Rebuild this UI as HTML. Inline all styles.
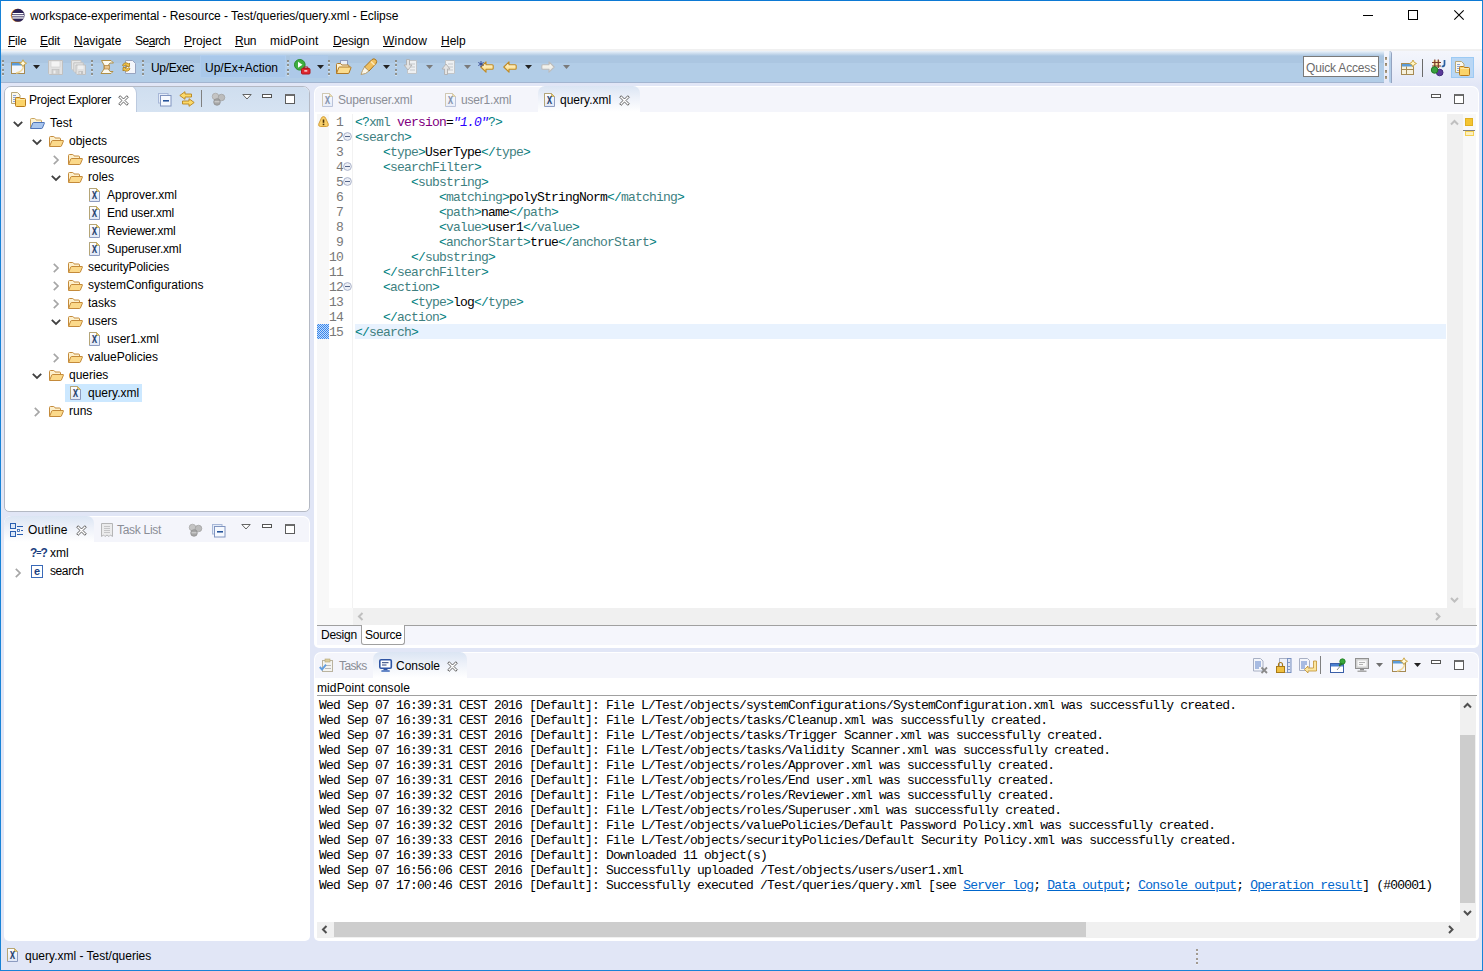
<!DOCTYPE html>
<html><head><meta charset="utf-8"><title>Eclipse</title>
<style>
*{box-sizing:border-box;margin:0;padding:0}
html,body{width:1483px;height:971px;overflow:hidden;background:#e1e6f6}
body{font-family:"Liberation Sans",sans-serif;font-size:12px;color:#000;position:relative}
.a{position:absolute}
.t{position:absolute;white-space:pre;line-height:14px;height:14px}
.mono{font-family:"Liberation Mono",monospace;font-size:11.67px}
u{text-decoration:underline;text-underline-offset:1px}
#win{position:absolute;left:0;top:0;width:1483px;height:971px;border:1px solid #1883d7;border-top-color:#0c79d4}
#title{left:1px;top:1px;width:1481px;height:30px;background:#fff}
#menu{left:1px;top:31px;width:1481px;height:19px;background:#fff}
#tbar{left:1px;top:49px;width:1383px;height:34px;background:linear-gradient(#f0f0f0 0,#f0f0f0 2px,#ecf3fa 2px,#abc6e1 7px,#abc6e1 14px,#b2cde7 14px,#b2cde7 33px,#a3b5d0 33px)}
.panel{position:absolute;background:#fff;border-radius:7px 7px 5px 5px;box-shadow:0 0 0 1px #c9d0e4;overflow:hidden}
.hdr{position:absolute;left:1px;top:1px;right:1px;height:25px;background:#f4f5fb;border-radius:6px 6px 0 0}
.hdr.act{left:0;top:0;right:0;height:25px;border-radius:0;background:linear-gradient(#cfdeef,#d6e3f2)}
.tab{position:absolute;top:0;height:26px;background:#fff;border-radius:7px 7px 0 0}
.tab.in{background:linear-gradient(#dbe5f3,#edf1f9 45%,#fff)}
.row{position:absolute;left:0;height:18px;width:304px}
.code{position:absolute;white-space:pre;height:15px;line-height:15px;font-family:"Liberation Mono",monospace;font-size:13px;letter-spacing:-.8px}
.ln{position:absolute;width:30px;text-align:right;height:15px;line-height:15px;font-family:"Liberation Mono",monospace;font-size:13px;letter-spacing:-.8px;color:#787878}
.tg{color:#3f7f7f}.br{color:#008080}.at{color:#7f007f}.av{color:#2a00ff;font-style:italic}
.con{position:absolute;white-space:pre;height:15px;line-height:15px;font-family:"Liberation Mono",monospace;font-size:13px;letter-spacing:-.8px}
.con a{color:#0066cc;text-decoration:underline}
svg{position:absolute;overflow:visible}
</style></head>
<body>
<div id="win"></div>
<div id="title" class="a"></div>
<svg style="left:10px;top:8px" width="16" height="15" viewBox="0 0 16 15"><circle cx="7.300" cy="7.300" r="6.500" fill="#f7941e"/><circle cx="8.100" cy="7.300" r="6.500" fill="#2c2255"/><rect x="2.500" y="5" width="11" height="1.300" fill="#fff"/><rect x="1.900" y="7.100" width="12.300" height="1.300" fill="#fff"/><rect x="2.300" y="9.300" width="11.500" height="1.300" fill="#fff"/></svg>
<div class="t" style="left:30px;top:9px;letter-spacing:-.04px">workspace-experimental - Resource - Test/queries/query.xml - Eclipse</div>
<svg style="left:1363px;top:10px" width="60" height="12" viewBox="0 0 60 12"><path d="M0 5.500h10" stroke="#000" fill="none"/><rect x="45.500" y=".5" width="9" height="9" fill="none" stroke="#000"/></svg>
<svg style="left:1454px;top:10px" width="10" height="10" viewBox="0 0 10 10"><path d="M.3.300l9.400 9.400M9.700.300l-9.400 9.400" stroke="#000" stroke-width="1.100" fill="none"/></svg>
<div id="menu" class="a"></div>
<div class="t" style="left:8px;top:34px"><span style="letter-spacing:-.25px"><u>F</u>ile</span></div>
<div class="t" style="left:40px;top:34px"><span style="letter-spacing:-.2px"><u>E</u>dit</span></div>
<div class="t" style="left:74px;top:34px"><u>N</u>avigate</div>
<div class="t" style="left:135px;top:34px"><span style="letter-spacing:-.5px">Se<u>a</u>rch</span></div>
<div class="t" style="left:184px;top:34px"><u>P</u>roject</div>
<div class="t" style="left:235px;top:34px"><span style="letter-spacing:-.3px"><u>R</u>un</span></div>
<div class="t" style="left:270px;top:34px"><span style="letter-spacing:.25px">midPoint</span></div>
<div class="t" style="left:333px;top:34px"><span style="letter-spacing:-.2px"><u>D</u>esign</span></div>
<div class="t" style="left:383px;top:34px"><span style="letter-spacing:.25px"><u>W</u>indow</span></div>
<div class="t" style="left:441px;top:34px"><u>H</u>elp</div>
<div class="a" style="left:1px;top:49px;width:1481px;height:2px;background:#f0f0f0"></div>
<div id="tbar" class="a"></div>
<div class="a" style="left:2px;top:60px;width:2px;height:3px;background:linear-gradient(rgba(120,104,78,.6) 0,rgba(120,104,78,.6) 2px,rgba(255,255,255,.4) 2px)"></div><div class="a" style="left:2px;top:64px;width:2px;height:3px;background:linear-gradient(rgba(120,104,78,.6) 0,rgba(120,104,78,.6) 2px,rgba(255,255,255,.4) 2px)"></div><div class="a" style="left:2px;top:69px;width:2px;height:3px;background:linear-gradient(rgba(120,104,78,.6) 0,rgba(120,104,78,.6) 2px,rgba(255,255,255,.4) 2px)"></div><div class="a" style="left:2px;top:73px;width:2px;height:3px;background:linear-gradient(rgba(120,104,78,.6) 0,rgba(120,104,78,.6) 2px,rgba(255,255,255,.4) 2px)"></div>
<svg style="left:11px;top:59px" width="17" height="16" viewBox="0 0 17 16"><rect x=".5" y="3.500" width="13" height="11" fill="#f4f7fc" stroke="#a68a52"/><rect x="1" y="4" width="12" height="2.500" fill="#5a9bd8"/><path d="M12 .8l1.200 2.300 2.300 1.200-2.300 1.200-1.200 2.300-1.200-2.300-2.300-1.200 2.300-1.200z" fill="#fffbe0" stroke="#c9a03a" stroke-width=".9"/><path d="M5 14q6-1 7.500-6" stroke="#f0d89a" stroke-width="1.500" fill="none"/></svg>
<svg style="left:33px;top:65px" width="7" height="4" viewBox="0 0 7 4"><path d="M0 0h7L3.5 4z" fill="#222"/></svg>
<svg style="left:48px;top:60px" width="15" height="15" viewBox="0 0 15 15"><path d="M.5.5h14v14h-13l-1-1z" fill="#e2e2e2" stroke="#c0c0c0"/><rect x="3" y="1" width="9" height="6" fill="#f4f4f4" stroke="#cccccc" stroke-width=".6"/><rect x="4" y="9.500" width="7" height="5" fill="#d0d0d0" stroke="#bcbcbc" stroke-width=".6"/><rect x="5.500" y="10.500" width="2" height="3" fill="#eee"/></svg>
<svg style="left:71px;top:60px" width="15" height="15" viewBox="0 0 15 15"><path d="M.500.500h9.500v9.500h-8.500l-1-1z" fill="#e6e6e6" stroke="#c6c6c6"/><path d="M2.800 2.800h9.500v9.500h-8.500l-1-1z" fill="#e6e6e6" stroke="#c4c4c4"/><path d="M5 5h9.500v9.500h-8.500l-1-1z" fill="#e2e2e2" stroke="#c0c0c0"/><rect x="7" y="5.500" width="5.500" height="3.500" fill="#f0f0f0"/><rect x="7.500" y="11" width="4.500" height="3.500" fill="#c2c2c2"/><rect x="8.500" y="11.800" width="1.300" height="2" fill="#eee"/></svg>
<div class="a" style="left:91px;top:60px;width:2px;height:3px;background:linear-gradient(rgba(120,104,78,.6) 0,rgba(120,104,78,.6) 2px,rgba(255,255,255,.4) 2px)"></div><div class="a" style="left:91px;top:64px;width:2px;height:3px;background:linear-gradient(rgba(120,104,78,.6) 0,rgba(120,104,78,.6) 2px,rgba(255,255,255,.4) 2px)"></div><div class="a" style="left:91px;top:69px;width:2px;height:3px;background:linear-gradient(rgba(120,104,78,.6) 0,rgba(120,104,78,.6) 2px,rgba(255,255,255,.4) 2px)"></div><div class="a" style="left:91px;top:73px;width:2px;height:3px;background:linear-gradient(rgba(120,104,78,.6) 0,rgba(120,104,78,.6) 2px,rgba(255,255,255,.4) 2px)"></div>
<svg style="left:100px;top:59px" width="15" height="16" viewBox="0 0 15 16"><path d="M1.500 1.500h9.500l2.500 2.500h-3.500l-1.500 2v4l1.500 2.500h3l-2 2h-10l3-4.500v-4z" fill="#fdfaf0" stroke="#b09048"/><rect x="4.500" y="6.500" width="5" height="3.500" fill="#e8c48c" stroke="#b88a48" stroke-width=".8"/></svg>
<svg style="left:121px;top:59px" width="16" height="16" viewBox="0 0 16 16"><path d="M4.500 1.500h7l3 3v10h-10z" fill="#f4f6fb" stroke="#98a4c0"/><path d="M1.500 6.500a3.500 3.500 0 016-1.500l1-1v3.500h-3.500l1-1a2 2 0 00-3 .8zM9 9.500a3.500 3.500 0 01-6 1.500l-1 1v-3.500h3.500l-1 1a2 2 0 003-.8z" fill="#f4c64a" stroke="#a87a1c" stroke-width=".8"/></svg>
<div class="a" style="left:142px;top:60px;width:2px;height:3px;background:linear-gradient(rgba(120,104,78,.6) 0,rgba(120,104,78,.6) 2px,rgba(255,255,255,.4) 2px)"></div><div class="a" style="left:142px;top:64px;width:2px;height:3px;background:linear-gradient(rgba(120,104,78,.6) 0,rgba(120,104,78,.6) 2px,rgba(255,255,255,.4) 2px)"></div><div class="a" style="left:142px;top:69px;width:2px;height:3px;background:linear-gradient(rgba(120,104,78,.6) 0,rgba(120,104,78,.6) 2px,rgba(255,255,255,.4) 2px)"></div><div class="a" style="left:142px;top:73px;width:2px;height:3px;background:linear-gradient(rgba(120,104,78,.6) 0,rgba(120,104,78,.6) 2px,rgba(255,255,255,.4) 2px)"></div>
<div class="t" style="left:151px;top:61px;letter-spacing:-0.33px">Up/Exec</div>
<div class="a" style="left:200px;top:55px;width:86px;height:23px;background:#a9c8ea;border:1px solid #b0cdee"></div>
<div class="t" style="left:205px;top:61px">Up/Ex+Action</div>
<div class="a" style="left:287px;top:60px;width:2px;height:3px;background:linear-gradient(rgba(120,104,78,.6) 0,rgba(120,104,78,.6) 2px,rgba(255,255,255,.4) 2px)"></div><div class="a" style="left:287px;top:64px;width:2px;height:3px;background:linear-gradient(rgba(120,104,78,.6) 0,rgba(120,104,78,.6) 2px,rgba(255,255,255,.4) 2px)"></div><div class="a" style="left:287px;top:69px;width:2px;height:3px;background:linear-gradient(rgba(120,104,78,.6) 0,rgba(120,104,78,.6) 2px,rgba(255,255,255,.4) 2px)"></div><div class="a" style="left:287px;top:73px;width:2px;height:3px;background:linear-gradient(rgba(120,104,78,.6) 0,rgba(120,104,78,.6) 2px,rgba(255,255,255,.4) 2px)"></div>
<div class="a" style="left:290px;top:55px;width:38px;height:23px;background:#adc9e8"></div>
<svg style="left:294px;top:59px" width="17" height="16" viewBox="0 0 17 16"><circle cx="5.800" cy="5.800" r="5.300" fill="#3fae3f" stroke="#2a8a2c"/><path d="M4 2.800l4.500 3-4.500 3z" fill="#fff"/><rect x="7.500" y="9.500" width="8.500" height="5.500" rx="1" fill="#e02830" stroke="#b01820"/><path d="M9.800 9.500v-1.500h4v1.500" fill="none" stroke="#b01820"/><rect x="10.300" y="11.300" width="3" height="1.200" fill="#fff"/></svg>
<svg style="left:317px;top:65px" width="7" height="4" viewBox="0 0 7 4"><path d="M0 0h7L3.5 4z" fill="#222"/></svg>
<div class="a" style="left:328px;top:60px;width:2px;height:3px;background:linear-gradient(rgba(120,104,78,.6) 0,rgba(120,104,78,.6) 2px,rgba(255,255,255,.4) 2px)"></div><div class="a" style="left:328px;top:64px;width:2px;height:3px;background:linear-gradient(rgba(120,104,78,.6) 0,rgba(120,104,78,.6) 2px,rgba(255,255,255,.4) 2px)"></div><div class="a" style="left:328px;top:69px;width:2px;height:3px;background:linear-gradient(rgba(120,104,78,.6) 0,rgba(120,104,78,.6) 2px,rgba(255,255,255,.4) 2px)"></div><div class="a" style="left:328px;top:73px;width:2px;height:3px;background:linear-gradient(rgba(120,104,78,.6) 0,rgba(120,104,78,.6) 2px,rgba(255,255,255,.4) 2px)"></div>
<svg style="left:335px;top:59px" width="17" height="16" viewBox="0 0 17 16"><rect x="5.500" y="1.500" width="7" height="5" fill="#e9eef7" stroke="#8c9bbd"/><path d="M1.500 14.500v-9q0-1 1-1h3l1.300 1.500h6.200q1 0 1 1v1" fill="#fdf3d4" stroke="#b07a28"/><path d="M1.500 14.500l2.300-6q.2-.5.800-.5h10.900q.8 0 .5.700l-2 5.300q-.2.5-.8.500z" fill="#fbdc8e" stroke="#b07a28"/></svg>
<svg style="left:360px;top:58px" width="18" height="17" viewBox="0 0 18 17"><path d="M12 1.500q2-1.500 3.800.2 1.700 1.800.2 3.800l-7 7.500-4.500-4z" fill="#f0c060" stroke="#a8741c"/><path d="M4.500 9l4.500 4-3.500 2.500-4.500 1 1.500-4z" fill="#fbf6e8" stroke="#b8a070"/><path d="M11 3.500l3.500 3.500" stroke="#fbe8b8" stroke-width="1.500"/></svg>
<svg style="left:383px;top:65px" width="7" height="4" viewBox="0 0 7 4"><path d="M0 0h7L3.5 4z" fill="#222"/></svg>
<div class="a" style="left:395px;top:60px;width:2px;height:3px;background:linear-gradient(rgba(120,104,78,.6) 0,rgba(120,104,78,.6) 2px,rgba(255,255,255,.4) 2px)"></div><div class="a" style="left:395px;top:64px;width:2px;height:3px;background:linear-gradient(rgba(120,104,78,.6) 0,rgba(120,104,78,.6) 2px,rgba(255,255,255,.4) 2px)"></div><div class="a" style="left:395px;top:69px;width:2px;height:3px;background:linear-gradient(rgba(120,104,78,.6) 0,rgba(120,104,78,.6) 2px,rgba(255,255,255,.4) 2px)"></div><div class="a" style="left:395px;top:73px;width:2px;height:3px;background:linear-gradient(rgba(120,104,78,.6) 0,rgba(120,104,78,.6) 2px,rgba(255,255,255,.4) 2px)"></div>
<svg style="left:403px;top:59px" width="15" height="16" viewBox="0 0 15 16"><path d="M4.500 1.500h9v13h-9z" fill="#eef0f2" stroke="#c0c4c8"/><path d="M7 5h5M7 8h5M7 11h5" stroke="#c4c8cc"/><path d="M3.500.5h3v5.500h2.500l-4 5-4-5h2.500z" fill="#e4e4e4" stroke="#b0b0b0" stroke-width=".9"/></svg>
<svg style="left:426px;top:65px" width="7" height="4" viewBox="0 0 7 4"><path d="M0 0h7L3.5 4z" fill="#7a7a7a"/></svg>
<svg style="left:441px;top:59px" width="15" height="16" viewBox="0 0 15 16"><path d="M4.500 1.500h9v13h-9z" fill="#eef0f2" stroke="#c0c4c8"/><path d="M7 5h5M7 8h5M7 11h5" stroke="#c4c8cc"/><path d="M3.500 15.500h3v-5.500h2.500l-4-5-4 5h2.500z" fill="#e4e4e4" stroke="#b0b0b0" stroke-width=".9"/></svg>
<svg style="left:464px;top:65px" width="7" height="4" viewBox="0 0 7 4"><path d="M0 0h7L3.5 4z" fill="#7a7a7a"/></svg>
<svg style="left:480px;top:61px" width="14" height="12" viewBox="0 0 14 12"><defs><linearGradient id="ag480" x1="0" y1="0" x2="0" y2="1"><stop offset="0" stop-color="#fffdf0"/><stop offset="1" stop-color="#fbd468"/></linearGradient></defs><path d="M.8 6L6 .8v3h6.200q1 0 1 1v2.400q0 1-1 1H6v3z" fill="url(#ag480)" stroke="#c08a24" stroke-width="1.100" stroke-linejoin="round"/></svg>
<svg style="left:477.500px;top:60.500px" width="6" height="6" viewBox="0 0 6 6"><path d="M3 0v6M.3 1.500l5.400 3M5.700 1.500L.3 4.500" stroke="#2a3f8f" stroke-width=".9"/></svg>
<svg style="left:503px;top:61px" width="14" height="12" viewBox="0 0 14 12"><defs><linearGradient id="ag503" x1="0" y1="0" x2="0" y2="1"><stop offset="0" stop-color="#fffdf0"/><stop offset="1" stop-color="#fbd468"/></linearGradient></defs><path d="M.8 6L6 .8v3h6.200q1 0 1 1v2.400q0 1-1 1H6v3z" fill="url(#ag503)" stroke="#c08a24" stroke-width="1.100" stroke-linejoin="round"/></svg>
<svg style="left:525px;top:65px" width="7" height="4" viewBox="0 0 7 4"><path d="M0 0h7L3.5 4z" fill="#222"/></svg>
<svg style="left:541px;top:61px" width="14" height="12" viewBox="0 0 14 12"><defs><linearGradient id="ag541" x1="0" y1="0" x2="0" y2="1"><stop offset="0" stop-color="#fffdf0"/><stop offset="1" stop-color="#e6e6e6"/></linearGradient></defs><path transform="translate(14,0) scale(-1,1)" d="M.8 6L6 .8v3h6.200q1 0 1 1v2.400q0 1-1 1H6v3z" fill="url(#ag541)" stroke="#bcbcbc" stroke-width="1.100" stroke-linejoin="round"/></svg>
<svg style="left:563px;top:65px" width="7" height="4" viewBox="0 0 7 4"><path d="M0 0h7L3.5 4z" fill="#7a7a7a"/></svg>
<div class="a" style="left:1384px;top:51px;width:98px;height:35px;background:linear-gradient(#f4f6fc,#eef1fa 40%,#e1e6f6)"></div>
<div class="a" style="left:1389px;top:51px;width:3px;height:32px;background:linear-gradient(#dbe7f4,#b2cde7 8px);border-right:1px solid #93a3c0;border-radius:0 3px 0 2px"></div>
<div class="a" style="left:1303px;top:56px;width:76px;height:21px;background:#fff;border:1px solid #7a7a7a"></div>
<div class="t" style="left:1306px;top:60.500px;color:#6a6a6a;letter-spacing:-.17px">Quick Access</div>
<div class="a" style="left:1385px;top:57px;width:2px;height:3px;background:linear-gradient(#8a7c68,#b8a888)"></div>
<div class="a" style="left:1385px;top:63px;width:2px;height:3px;background:linear-gradient(#8a7c68,#b8a888)"></div>
<div class="a" style="left:1385px;top:70px;width:2px;height:3px;background:linear-gradient(#8a7c68,#b8a888)"></div>
<div class="a" style="left:1385px;top:76px;width:2px;height:3px;background:linear-gradient(#8a7c68,#b8a888)"></div>
<svg style="left:1401px;top:60px" width="16" height="16" viewBox="0 0 16 16"><rect x=".5" y="3.500" width="12" height="11" fill="#f6f1dc" stroke="#a68a52"/><rect x="1" y="4" width="11" height="2.500" fill="#5a9bd8"/><path d="M1 9.500h11M5.500 6.500v8" stroke="#a68a52"/><path d="M12 0l1.200 2.300 2.300 1.200-2.300 1.200L12 7l-1.200-2.300-2.300-1.200 2.300-1.200z" fill="#fff6c4" stroke="#c9a03a" stroke-width=".9"/></svg>
<div class="a" style="left:1422px;top:59px;width:1px;height:18px;background:#6a6a6a"></div>
<svg style="left:1430px;top:58px" width="17" height="19" viewBox="0 0 17 19"><rect x="3" y="2.500" width="7" height="7" fill="#fbe6a8"/><path d="M2 4.500h9M2 8h9M4.800 1.500v8.500M8.300 1.500v8.500" stroke="#7a3a2a" stroke-width="1.200" fill="none"/><path d="M14.500 2v4.500q0 2-2.800 2" stroke="#2a5fa0" stroke-width="1.700" fill="none"/><circle cx="9.700" cy="14.500" r="3.300" fill="#5a3a9a" stroke="#40287a"/><circle cx="4.600" cy="12" r="3.300" fill="#3aa040" stroke="#1f7a22"/></svg>
<div class="a" style="left:1451px;top:57px;width:23px;height:21px;background:#b9d7f5;border:1px solid #9ccaf4"></div>
<svg style="left:1455px;top:60px" width="16" height="16" viewBox="0 0 16 16"><path d="M.500 1.500h6l2.500 2.500v8.500h-8.500z" fill="#fbf8ec" stroke="#b8a878"/><path d="M2 4.500h3M2 6.500h4M2 8.500h3M2 10.500h3" stroke="#7a9ad8" stroke-width=".9"/><path d="M4.500 14.500v-7q0-1 1-1h3l1 1h4q1 0 1 1v6q0 1-1 1h-8q-1 0-1-1z" fill="#fbd46a" stroke="#b87a1a"/><path d="M5.500 8.500h8.500" stroke="#fde9a8" stroke-width="1"/></svg>
<div class="panel" style="left:4px;top:86px;width:306px;height:426px;box-shadow:none;border:1px solid #b4b9c4"><div class="hdr act"></div><div class="tab" style="left:-1px;top:-1px;height:26px;width:132px;box-shadow:1px 0 0 #bccadf"></div></div>
<svg style="left:10.5px;top:91px" width="16" height="16" viewBox="0 0 16 16"><path d="M.500 1.500h6l2.500 2.500v8.500h-8.500z" fill="#fbf8ec" stroke="#b8a878"/><path d="M2 4.500h3M2 6.500h4M2 8.500h3M2 10.500h3" stroke="#7a9ad8" stroke-width=".9"/><path d="M4.500 14.500v-7q0-1 1-1h3l1 1h4q1 0 1 1v6q0 1-1 1h-8q-1 0-1-1z" fill="#fbd46a" stroke="#b87a1a"/><path d="M5.500 8.500h8.500" stroke="#fde9a8" stroke-width="1"/></svg>
<div class="t" style="left:29px;top:93px;letter-spacing:-.2px">Project Explorer</div>
<svg style="left:118px;top:94.5px" width="11" height="11" viewBox="0 0 11 11"><path d="M.7 2.2L2.2.7 5.5 4 8.8.7l1.5 1.5L7 5.5l3.3 3.3-1.5 1.5L5.5 7 2.2 10.3.7 8.800 4 5.500z" fill="#fff" stroke="#505050" stroke-width=".9"/></svg>
<svg style="left:158px;top:92px" width="14" height="15" viewBox="0 0 14 15"><rect x=".5" y="1.500" width="9.500" height="9.500" fill="#e4ecf8" stroke="#a8b8d8"/><rect x="2.500" y="3.500" width="10.500" height="10.500" fill="#f6f9fe" stroke="#8094c0"/><path d="M5 8.800h6" stroke="#1a4a94" stroke-width="1.500"/></svg>
<svg style="left:179px;top:91px" width="16" height="16" viewBox="0 0 16 16"><path d="M.8 4.500L6 .7v2.300h6.500v3H6v2.300z" fill="#fbd96a" stroke="#b8841c" stroke-width=".9" stroke-linejoin="round"/><path d="M15.200 11.500L10 15.300v-2.300H3.500v-3H10V7.700z" fill="#fbd96a" stroke="#b8841c" stroke-width=".9" stroke-linejoin="round"/></svg>
<div class="a" style="left:201px;top:90px;width:1px;height:17px;background:#808080"></div>
<svg style="left:211px;top:92px" width="15" height="14" viewBox="0 0 15 14"><circle cx="4.500" cy="4.500" r="3.300" fill="#c4c4c4" stroke="#a6a6a6" stroke-width=".7"/><circle cx="10.500" cy="5.500" r="3.300" fill="#bcbcbc" stroke="#9e9e9e" stroke-width=".7"/><circle cx="6" cy="10" r="3.300" fill="#a6a6a6" stroke="#8c8c8c" stroke-width=".7"/><path d="M3.500 9.800h5" stroke="#dcdcdc" stroke-width=".9"/></svg>
<svg style="left:242px;top:94px" width="10" height="6" viewBox="0 0 10 6"><path d="M.8.5h8.400L5 5z" fill="#fff" stroke="#555" stroke-width=".9"/></svg>
<div class="a" style="left:262px;top:94px;width:10px;height:4px;border:1px solid #555;background:#fff"></div>
<div class="a" style="left:285px;top:94px;width:10px;height:10px;border:1px solid #5c5c5c;border-top:2px solid #6c6c6c;background:#fff"></div>
<svg style="left:29px;top:114px" width="16" height="16" viewBox="0 0 16 16"><path d="M1.500 14V5.500q0-1 1-1h3q.8 0 1.200.8l.4.700h4.400q1 0 1 1v1.500" fill="#fdf3d4" stroke="#c9a45d"/><path d="M1.500 14.500l2.300-5.500q.2-.5.800-.5h10.400q.7 0 .4.700l-2 4.800q-.2.500-.8.500z" fill="#a9c6ee" stroke="#4f74b8"/></svg>
<svg style="left:13px;top:121px" width="10" height="6" viewBox="0 0 10 6"><path d="M.8.8L5 5 9.2.8" fill="none" stroke="#404040" stroke-width="1.800"/></svg>
<div class="t" style="left:50px;top:116px">Test</div>
<svg style="left:48px;top:132px" width="16" height="16" viewBox="0 0 16 16"><path d="M1.500 14V5.500q0-1 1-1h3q.8 0 1.200.8l.4.700h4.400q1 0 1 1v1.500" fill="#fdf0cc" stroke="#c48a3a"/><path d="M1.500 14.500l2.300-5.500q.2-.5.800-.5h10.400q.7 0 .4.700l-2 4.800q-.2.500-.8.500z" fill="#fbd98a" stroke="#c48a3a"/></svg>
<svg style="left:32px;top:139px" width="10" height="6" viewBox="0 0 10 6"><path d="M.8.8L5 5 9.2.8" fill="none" stroke="#404040" stroke-width="1.800"/></svg>
<div class="t" style="left:69px;top:134px">objects</div>
<svg style="left:67px;top:150px" width="16" height="16" viewBox="0 0 16 16"><path d="M1.500 14V5.500q0-1 1-1h3q.8 0 1.200.8l.4.700h4.400q1 0 1 1v1.500" fill="#fdf0cc" stroke="#c48a3a"/><path d="M1.500 14.500l2.300-5.500q.2-.5.800-.5h10.400q.7 0 .4.700l-2 4.800q-.2.500-.8.500z" fill="#fbd98a" stroke="#c48a3a"/></svg>
<svg style="left:53px;top:155px" width="6" height="10" viewBox="0 0 6 10"><path d="M.8.8L5 5 .8 9.2" fill="none" stroke="#a6a6a6" stroke-width="1.700"/></svg>
<div class="t" style="left:88px;top:152px;letter-spacing:-0.15px">resources</div>
<svg style="left:67px;top:168px" width="16" height="16" viewBox="0 0 16 16"><path d="M1.500 14V5.500q0-1 1-1h3q.8 0 1.200.8l.4.700h4.400q1 0 1 1v1.500" fill="#fdf0cc" stroke="#c48a3a"/><path d="M1.500 14.500l2.300-5.500q.2-.5.800-.5h10.400q.7 0 .4.700l-2 4.800q-.2.500-.8.500z" fill="#fbd98a" stroke="#c48a3a"/></svg>
<svg style="left:51px;top:175px" width="10" height="6" viewBox="0 0 10 6"><path d="M.8.8L5 5 9.2.8" fill="none" stroke="#404040" stroke-width="1.800"/></svg>
<div class="t" style="left:88px;top:170px">roles</div>
<svg style="left:89px;top:186px;opacity:1" width="12" height="16" viewBox="0 0 12 16"><defs><linearGradient id="xg" x1="0" y1="0" x2="0" y2="1"><stop offset="0" stop-color="#fff"/><stop offset="1" stop-color="#dfe7f7"/></linearGradient></defs><path d="M.500 2.500h7l3 3v10h-10z" fill="url(#xg)" stroke="#8c9bc0"/><path d="M.500 15V2.500h7" fill="none" stroke="#b5a576"/><path d="M7.500 2.500l3 3h-3z" fill="#ecca72" stroke="#c4a85a" stroke-width=".8"/><text x="4.100" y="12.900" transform="scale(.74 1)" style="font-family:'Liberation Sans',sans-serif;font-weight:bold;font-size:10px" fill="#203c6c" stroke="#203c6c" stroke-width=".25">X</text></svg>
<div class="t" style="left:107px;top:188px">Approver.xml</div>
<svg style="left:89px;top:204px;opacity:1" width="12" height="16" viewBox="0 0 12 16"><defs><linearGradient id="xg" x1="0" y1="0" x2="0" y2="1"><stop offset="0" stop-color="#fff"/><stop offset="1" stop-color="#dfe7f7"/></linearGradient></defs><path d="M.500 2.500h7l3 3v10h-10z" fill="url(#xg)" stroke="#8c9bc0"/><path d="M.500 15V2.500h7" fill="none" stroke="#b5a576"/><path d="M7.500 2.500l3 3h-3z" fill="#ecca72" stroke="#c4a85a" stroke-width=".8"/><text x="4.100" y="12.900" transform="scale(.74 1)" style="font-family:'Liberation Sans',sans-serif;font-weight:bold;font-size:10px" fill="#203c6c" stroke="#203c6c" stroke-width=".25">X</text></svg>
<div class="t" style="left:107px;top:206px;letter-spacing:-0.2px">End user.xml</div>
<svg style="left:89px;top:222px;opacity:1" width="12" height="16" viewBox="0 0 12 16"><defs><linearGradient id="xg" x1="0" y1="0" x2="0" y2="1"><stop offset="0" stop-color="#fff"/><stop offset="1" stop-color="#dfe7f7"/></linearGradient></defs><path d="M.500 2.500h7l3 3v10h-10z" fill="url(#xg)" stroke="#8c9bc0"/><path d="M.500 15V2.500h7" fill="none" stroke="#b5a576"/><path d="M7.500 2.500l3 3h-3z" fill="#ecca72" stroke="#c4a85a" stroke-width=".8"/><text x="4.100" y="12.900" transform="scale(.74 1)" style="font-family:'Liberation Sans',sans-serif;font-weight:bold;font-size:10px" fill="#203c6c" stroke="#203c6c" stroke-width=".25">X</text></svg>
<div class="t" style="left:107px;top:224px;letter-spacing:-0.25px">Reviewer.xml</div>
<svg style="left:89px;top:240px;opacity:1" width="12" height="16" viewBox="0 0 12 16"><defs><linearGradient id="xg" x1="0" y1="0" x2="0" y2="1"><stop offset="0" stop-color="#fff"/><stop offset="1" stop-color="#dfe7f7"/></linearGradient></defs><path d="M.500 2.500h7l3 3v10h-10z" fill="url(#xg)" stroke="#8c9bc0"/><path d="M.500 15V2.500h7" fill="none" stroke="#b5a576"/><path d="M7.500 2.500l3 3h-3z" fill="#ecca72" stroke="#c4a85a" stroke-width=".8"/><text x="4.100" y="12.900" transform="scale(.74 1)" style="font-family:'Liberation Sans',sans-serif;font-weight:bold;font-size:10px" fill="#203c6c" stroke="#203c6c" stroke-width=".25">X</text></svg>
<div class="t" style="left:107px;top:242px;letter-spacing:-0.2px">Superuser.xml</div>
<svg style="left:67px;top:258px" width="16" height="16" viewBox="0 0 16 16"><path d="M1.500 14V5.500q0-1 1-1h3q.8 0 1.200.8l.4.700h4.400q1 0 1 1v1.500" fill="#fdf0cc" stroke="#c48a3a"/><path d="M1.500 14.500l2.300-5.500q.2-.5.800-.5h10.400q.7 0 .4.700l-2 4.800q-.2.500-.8.500z" fill="#fbd98a" stroke="#c48a3a"/></svg>
<svg style="left:53px;top:263px" width="6" height="10" viewBox="0 0 6 10"><path d="M.8.8L5 5 .8 9.2" fill="none" stroke="#a6a6a6" stroke-width="1.700"/></svg>
<div class="t" style="left:88px;top:260px;letter-spacing:-0.1px">securityPolicies</div>
<svg style="left:67px;top:276px" width="16" height="16" viewBox="0 0 16 16"><path d="M1.500 14V5.500q0-1 1-1h3q.8 0 1.200.8l.4.700h4.400q1 0 1 1v1.500" fill="#fdf0cc" stroke="#c48a3a"/><path d="M1.500 14.500l2.300-5.500q.2-.5.800-.5h10.400q.7 0 .4.700l-2 4.800q-.2.500-.8.500z" fill="#fbd98a" stroke="#c48a3a"/></svg>
<svg style="left:53px;top:281px" width="6" height="10" viewBox="0 0 6 10"><path d="M.8.8L5 5 .8 9.2" fill="none" stroke="#a6a6a6" stroke-width="1.700"/></svg>
<div class="t" style="left:88px;top:278px">systemConfigurations</div>
<svg style="left:67px;top:294px" width="16" height="16" viewBox="0 0 16 16"><path d="M1.500 14V5.500q0-1 1-1h3q.8 0 1.200.8l.4.700h4.400q1 0 1 1v1.500" fill="#fdf0cc" stroke="#c48a3a"/><path d="M1.500 14.500l2.300-5.500q.2-.5.800-.5h10.400q.7 0 .4.700l-2 4.800q-.2.500-.8.500z" fill="#fbd98a" stroke="#c48a3a"/></svg>
<svg style="left:53px;top:299px" width="6" height="10" viewBox="0 0 6 10"><path d="M.8.8L5 5 .8 9.2" fill="none" stroke="#a6a6a6" stroke-width="1.700"/></svg>
<div class="t" style="left:88px;top:296px">tasks</div>
<svg style="left:67px;top:312px" width="16" height="16" viewBox="0 0 16 16"><path d="M1.500 14V5.500q0-1 1-1h3q.8 0 1.200.8l.4.700h4.400q1 0 1 1v1.500" fill="#fdf0cc" stroke="#c48a3a"/><path d="M1.500 14.500l2.300-5.500q.2-.5.800-.5h10.400q.7 0 .4.700l-2 4.800q-.2.500-.8.500z" fill="#fbd98a" stroke="#c48a3a"/></svg>
<svg style="left:51px;top:319px" width="10" height="6" viewBox="0 0 10 6"><path d="M.8.8L5 5 9.2.8" fill="none" stroke="#404040" stroke-width="1.800"/></svg>
<div class="t" style="left:88px;top:314px">users</div>
<svg style="left:89px;top:330px;opacity:1" width="12" height="16" viewBox="0 0 12 16"><defs><linearGradient id="xg" x1="0" y1="0" x2="0" y2="1"><stop offset="0" stop-color="#fff"/><stop offset="1" stop-color="#dfe7f7"/></linearGradient></defs><path d="M.500 2.500h7l3 3v10h-10z" fill="url(#xg)" stroke="#8c9bc0"/><path d="M.500 15V2.500h7" fill="none" stroke="#b5a576"/><path d="M7.500 2.500l3 3h-3z" fill="#ecca72" stroke="#c4a85a" stroke-width=".8"/><text x="4.100" y="12.900" transform="scale(.74 1)" style="font-family:'Liberation Sans',sans-serif;font-weight:bold;font-size:10px" fill="#203c6c" stroke="#203c6c" stroke-width=".25">X</text></svg>
<div class="t" style="left:107px;top:332px">user1.xml</div>
<svg style="left:67px;top:348px" width="16" height="16" viewBox="0 0 16 16"><path d="M1.500 14V5.500q0-1 1-1h3q.8 0 1.200.8l.4.700h4.400q1 0 1 1v1.500" fill="#fdf0cc" stroke="#c48a3a"/><path d="M1.500 14.500l2.300-5.500q.2-.5.800-.5h10.400q.7 0 .4.700l-2 4.800q-.2.500-.8.500z" fill="#fbd98a" stroke="#c48a3a"/></svg>
<svg style="left:53px;top:353px" width="6" height="10" viewBox="0 0 6 10"><path d="M.8.8L5 5 .8 9.2" fill="none" stroke="#a6a6a6" stroke-width="1.700"/></svg>
<div class="t" style="left:88px;top:350px">valuePolicies</div>
<svg style="left:48px;top:366px" width="16" height="16" viewBox="0 0 16 16"><path d="M1.500 14V5.500q0-1 1-1h3q.8 0 1.200.8l.4.700h4.400q1 0 1 1v1.500" fill="#fdf0cc" stroke="#c48a3a"/><path d="M1.500 14.500l2.300-5.500q.2-.5.800-.5h10.400q.7 0 .4.700l-2 4.800q-.2.500-.8.500z" fill="#fbd98a" stroke="#c48a3a"/></svg>
<svg style="left:32px;top:373px" width="10" height="6" viewBox="0 0 10 6"><path d="M.8.8L5 5 9.2.8" fill="none" stroke="#404040" stroke-width="1.800"/></svg>
<div class="t" style="left:69px;top:368px">queries</div>
<div class="a" style="left:65px;top:384px;width:77px;height:18px;background:#cce8ff"></div>
<svg style="left:70px;top:384px;opacity:1" width="12" height="16" viewBox="0 0 12 16"><defs><linearGradient id="xg" x1="0" y1="0" x2="0" y2="1"><stop offset="0" stop-color="#fff"/><stop offset="1" stop-color="#dfe7f7"/></linearGradient></defs><path d="M.500 2.500h7l3 3v10h-10z" fill="url(#xg)" stroke="#8c9bc0"/><path d="M.500 15V2.500h7" fill="none" stroke="#b5a576"/><path d="M7.500 2.500l3 3h-3z" fill="#ecca72" stroke="#c4a85a" stroke-width=".8"/><text x="4.100" y="12.900" transform="scale(.74 1)" style="font-family:'Liberation Sans',sans-serif;font-weight:bold;font-size:10px" fill="#203c6c" stroke="#203c6c" stroke-width=".25">X</text></svg>
<div class="t" style="left:88px;top:386px">query.xml</div>
<svg style="left:48px;top:402px" width="16" height="16" viewBox="0 0 16 16"><path d="M1.500 14V5.500q0-1 1-1h3q.8 0 1.200.8l.4.700h4.400q1 0 1 1v1.500" fill="#fdf0cc" stroke="#c48a3a"/><path d="M1.500 14.500l2.300-5.500q.2-.5.800-.5h10.400q.7 0 .4.700l-2 4.800q-.2.500-.8.500z" fill="#fbd98a" stroke="#c48a3a"/></svg>
<svg style="left:34px;top:407px" width="6" height="10" viewBox="0 0 6 10"><path d="M.8.8L5 5 .8 9.2" fill="none" stroke="#a6a6a6" stroke-width="1.700"/></svg>
<div class="t" style="left:69px;top:404px">runs</div>
<div class="panel" style="left:4px;top:516px;width:306px;height:425px;box-shadow:none"><div class="hdr"></div><div class="tab in" style="left:0;width:90px"></div></div>
<svg style="left:10px;top:523px" width="14" height="15" viewBox="0 0 14 15"><rect x=".5" y=".5" width="5" height="5" fill="#dce8f8" stroke="#2a5fb0"/><rect x=".5" y="8.500" width="5" height="5" fill="#dce8f8" stroke="#2a5fb0"/><path d="M7 3.500h6M7 11.500h6" stroke="#2a5fb0"/><rect x="7.500" y="6.500" width="2" height="2" fill="#fff" stroke="#2a5fb0" stroke-width=".8"/><path d="M11 7.500h2" stroke="#2a5fb0"/></svg>
<div class="t" style="left:28px;top:523px;letter-spacing:0.25px">Outline</div>
<svg style="left:76px;top:524.5px" width="11" height="11" viewBox="0 0 11 11"><path d="M.7 2.2L2.2.7 5.5 4 8.8.7l1.5 1.5L7 5.5l3.3 3.3-1.5 1.5L5.5 7 2.2 10.3.7 8.800 4 5.500z" fill="#fff" stroke="#505050" stroke-width=".9"/></svg>
<svg style="left:101px;top:523px;opacity:.75" width="12" height="15" viewBox="0 0 12 15"><path d="M.500.500h11v13l-2 -1.500-1.500 1.500-2-1.500-2 1.500-1.500-1.500-2 1.500z" fill="#e8e8e8" stroke="#a0a0a0"/><path d="M3 3.500h6M3 5.500h6M3 7.500h6M3 9.500h6" stroke="#a8a8a8" stroke-width=".8"/></svg>
<div class="t" style="left:117px;top:523px;color:#8a8d96;letter-spacing:-0.3px">Task List</div>
<svg style="left:188px;top:523px" width="15" height="14" viewBox="0 0 15 14"><circle cx="4.500" cy="4.500" r="3.300" fill="#c4c4c4" stroke="#a6a6a6" stroke-width=".7"/><circle cx="10.500" cy="5.500" r="3.300" fill="#bcbcbc" stroke="#9e9e9e" stroke-width=".7"/><circle cx="6" cy="10" r="3.300" fill="#a6a6a6" stroke="#8c8c8c" stroke-width=".7"/><path d="M3.500 9.800h5" stroke="#dcdcdc" stroke-width=".9"/></svg>
<svg style="left:212px;top:523px" width="14" height="15" viewBox="0 0 14 15"><rect x=".5" y="1.500" width="9.500" height="9.500" fill="#e4ecf8" stroke="#a8b8d8"/><rect x="2.500" y="3.500" width="10.500" height="10.500" fill="#f6f9fe" stroke="#8094c0"/><path d="M5 8.800h6" stroke="#1a4a94" stroke-width="1.500"/></svg>
<svg style="left:241px;top:524px" width="10" height="6" viewBox="0 0 10 6"><path d="M.8.5h8.400L5 5z" fill="#fff" stroke="#555" stroke-width=".9"/></svg>
<div class="a" style="left:262px;top:524px;width:10px;height:4px;border:1px solid #555;background:#fff"></div>
<div class="a" style="left:285px;top:524px;width:10px;height:10px;border:1px solid #5c5c5c;border-top:2px solid #6c6c6c;background:#fff"></div>
<div class="t" style="left:30px;top:546px;font-weight:bold;color:#1c3f80;font-size:12px;letter-spacing:-1px">?<span style="font-size:9px;position:relative;top:-1px">=</span>?</div>
<div class="t" style="left:50px;top:546px">xml</div>
<svg style="left:15px;top:568px" width="6" height="10" viewBox="0 0 6 10"><path d="M.8.8L5 5 .8 9.2" fill="none" stroke="#a6a6a6" stroke-width="1.700"/></svg>
<div class="a" style="left:31px;top:565px;width:12px;height:13px;border:1px solid #3a6ab8;background:#fff"></div>
<div class="t" style="left:34px;top:564px;font-weight:bold;color:#1c3f80;font-size:11px">e</div>
<div class="t" style="left:50px;top:564px;letter-spacing:-0.4px">search</div>
<div class="panel" style="left:314px;top:86px;width:1165px;height:562px;box-shadow:none"><div class="hdr"></div><div class="tab in" style="left:224px;width:102px"></div></div>
<svg style="left:322px;top:91px;opacity:0.55" width="12" height="16" viewBox="0 0 12 16"><defs><linearGradient id="xg" x1="0" y1="0" x2="0" y2="1"><stop offset="0" stop-color="#fff"/><stop offset="1" stop-color="#dfe7f7"/></linearGradient></defs><path d="M.500 2.500h7l3 3v10h-10z" fill="url(#xg)" stroke="#8c9bc0"/><path d="M.500 15V2.500h7" fill="none" stroke="#b5a576"/><path d="M7.500 2.500l3 3h-3z" fill="#ecca72" stroke="#c4a85a" stroke-width=".8"/><text x="4.100" y="12.900" transform="scale(.74 1)" style="font-family:'Liberation Sans',sans-serif;font-weight:bold;font-size:10px" fill="#203c6c" stroke="#203c6c" stroke-width=".25">X</text></svg>
<div class="t" style="left:338px;top:93px;color:#8a8d96;letter-spacing:-0.2px">Superuser.xml</div>
<svg style="left:445px;top:91px;opacity:0.55" width="12" height="16" viewBox="0 0 12 16"><defs><linearGradient id="xg" x1="0" y1="0" x2="0" y2="1"><stop offset="0" stop-color="#fff"/><stop offset="1" stop-color="#dfe7f7"/></linearGradient></defs><path d="M.500 2.500h7l3 3v10h-10z" fill="url(#xg)" stroke="#8c9bc0"/><path d="M.500 15V2.500h7" fill="none" stroke="#b5a576"/><path d="M7.500 2.500l3 3h-3z" fill="#ecca72" stroke="#c4a85a" stroke-width=".8"/><text x="4.100" y="12.900" transform="scale(.74 1)" style="font-family:'Liberation Sans',sans-serif;font-weight:bold;font-size:10px" fill="#203c6c" stroke="#203c6c" stroke-width=".25">X</text></svg>
<div class="t" style="left:461px;top:93px;color:#8a8d96;letter-spacing:-0.2px">user1.xml</div>
<svg style="left:544px;top:91px;opacity:1" width="12" height="16" viewBox="0 0 12 16"><defs><linearGradient id="xg" x1="0" y1="0" x2="0" y2="1"><stop offset="0" stop-color="#fff"/><stop offset="1" stop-color="#dfe7f7"/></linearGradient></defs><path d="M.500 2.500h7l3 3v10h-10z" fill="url(#xg)" stroke="#8c9bc0"/><path d="M.500 15V2.500h7" fill="none" stroke="#b5a576"/><path d="M7.500 2.500l3 3h-3z" fill="#ecca72" stroke="#c4a85a" stroke-width=".8"/><text x="4.100" y="12.900" transform="scale(.74 1)" style="font-family:'Liberation Sans',sans-serif;font-weight:bold;font-size:10px" fill="#203c6c" stroke="#203c6c" stroke-width=".25">X</text></svg>
<div class="t" style="left:560px;top:93px">query.xml</div>
<svg style="left:619px;top:94.5px" width="11" height="11" viewBox="0 0 11 11"><path d="M.7 2.2L2.2.7 5.5 4 8.8.7l1.5 1.5L7 5.5l3.3 3.3-1.5 1.5L5.5 7 2.2 10.3.7 8.800 4 5.500z" fill="#fff" stroke="#505050" stroke-width=".9"/></svg>
<div class="a" style="left:1431px;top:94px;width:10px;height:4px;border:1px solid #555;background:#fff"></div>
<div class="a" style="left:1454px;top:94px;width:10px;height:10px;border:1px solid #5c5c5c;border-top:2px solid #6c6c6c;background:#fff"></div>
<div class="a" style="left:317px;top:114px;width:12px;height:494px;background:#f8f8f8"></div>
<div class="a" style="left:352px;top:114px;width:1px;height:494px;background:#f2f2f2"></div>
<div class="a" style="left:355px;top:324px;width:1091px;height:15px;background:#e8f2fe"></div>
<div class="a" style="left:317px;top:324px;width:12px;height:15px;background:#7cb0f0;background-image:repeating-conic-gradient(#3886ec 0 25%,#c2dcfb 0 50%);background-size:2px 2px"></div>
<svg style="left:318px;top:116px" width="11" height="11" viewBox="0 0 11 11"><path d="M5.500.600Q7.100.600 7.700 2.300L10.200 7.800Q11 10.400 8.600 10.500H2.400Q0 10.400.8 7.800L3.300 2.300Q3.900.600 5.500.600z" fill="#f8cf6a" stroke="#cf962c" stroke-width=".9"/><rect x="4.700" y="3.500" width="1.600" height="3.300" fill="#4a3208"/><rect x="4.700" y="7.700" width="1.600" height="1.500" fill="#4a3208"/></svg>
<div class="ln" style="left:313px;top:115px">1</div>
<div class="code" style="left:355px;top:115px"><span class="br">&lt;?</span><span class="tg">xml</span> <span class="at">version</span>=<span class="av">"1.0"</span><span class="br">?&gt;</span></div>
<div class="ln" style="left:313px;top:130px">2</div>
<svg style="left:343px;top:132px" width="9" height="9" viewBox="0 0 9 9"><circle cx="4.500" cy="4.500" r="3.900" fill="#eceff6" stroke="#a4acc4" stroke-width=".9"/><path d="M2 4.500h5" stroke="#56668a" stroke-width="1"/></svg>
<div class="code" style="left:355px;top:130px"><span class="br">&lt;</span><span class="tg">search</span><span class="br">&gt;</span></div>
<div class="ln" style="left:313px;top:145px">3</div>
<div class="code" style="left:383px;top:145px"><span class="br">&lt;</span><span class="tg">type</span><span class="br">&gt;</span>UserType<span class="br">&lt;/</span><span class="tg">type</span><span class="br">&gt;</span></div>
<div class="ln" style="left:313px;top:160px">4</div>
<svg style="left:343px;top:162px" width="9" height="9" viewBox="0 0 9 9"><circle cx="4.500" cy="4.500" r="3.900" fill="#eceff6" stroke="#a4acc4" stroke-width=".9"/><path d="M2 4.500h5" stroke="#56668a" stroke-width="1"/></svg>
<div class="code" style="left:383px;top:160px"><span class="br">&lt;</span><span class="tg">searchFilter</span><span class="br">&gt;</span></div>
<div class="ln" style="left:313px;top:175px">5</div>
<svg style="left:343px;top:177px" width="9" height="9" viewBox="0 0 9 9"><circle cx="4.500" cy="4.500" r="3.900" fill="#eceff6" stroke="#a4acc4" stroke-width=".9"/><path d="M2 4.500h5" stroke="#56668a" stroke-width="1"/></svg>
<div class="code" style="left:411px;top:175px"><span class="br">&lt;</span><span class="tg">substring</span><span class="br">&gt;</span></div>
<div class="ln" style="left:313px;top:190px">6</div>
<div class="code" style="left:439px;top:190px"><span class="br">&lt;</span><span class="tg">matching</span><span class="br">&gt;</span>polyStringNorm<span class="br">&lt;/</span><span class="tg">matching</span><span class="br">&gt;</span></div>
<div class="ln" style="left:313px;top:205px">7</div>
<div class="code" style="left:439px;top:205px"><span class="br">&lt;</span><span class="tg">path</span><span class="br">&gt;</span>name<span class="br">&lt;/</span><span class="tg">path</span><span class="br">&gt;</span></div>
<div class="ln" style="left:313px;top:220px">8</div>
<div class="code" style="left:439px;top:220px"><span class="br">&lt;</span><span class="tg">value</span><span class="br">&gt;</span>user1<span class="br">&lt;/</span><span class="tg">value</span><span class="br">&gt;</span></div>
<div class="ln" style="left:313px;top:235px">9</div>
<div class="code" style="left:439px;top:235px"><span class="br">&lt;</span><span class="tg">anchorStart</span><span class="br">&gt;</span>true<span class="br">&lt;/</span><span class="tg">anchorStart</span><span class="br">&gt;</span></div>
<div class="ln" style="left:313px;top:250px">10</div>
<div class="code" style="left:411px;top:250px"><span class="br">&lt;/</span><span class="tg">substring</span><span class="br">&gt;</span></div>
<div class="ln" style="left:313px;top:265px">11</div>
<div class="code" style="left:383px;top:265px"><span class="br">&lt;/</span><span class="tg">searchFilter</span><span class="br">&gt;</span></div>
<div class="ln" style="left:313px;top:280px">12</div>
<svg style="left:343px;top:282px" width="9" height="9" viewBox="0 0 9 9"><circle cx="4.500" cy="4.500" r="3.900" fill="#eceff6" stroke="#a4acc4" stroke-width=".9"/><path d="M2 4.500h5" stroke="#56668a" stroke-width="1"/></svg>
<div class="code" style="left:383px;top:280px"><span class="br">&lt;</span><span class="tg">action</span><span class="br">&gt;</span></div>
<div class="ln" style="left:313px;top:295px">13</div>
<div class="code" style="left:411px;top:295px"><span class="br">&lt;</span><span class="tg">type</span><span class="br">&gt;</span>log<span class="br">&lt;/</span><span class="tg">type</span><span class="br">&gt;</span></div>
<div class="ln" style="left:313px;top:310px">14</div>
<div class="code" style="left:383px;top:310px"><span class="br">&lt;/</span><span class="tg">action</span><span class="br">&gt;</span></div>
<div class="ln" style="left:313px;top:325px">15</div>
<div class="code" style="left:355px;top:325px"><span class="br">&lt;/</span><span class="tg">search</span><span class="br">&gt;</span></div>
<div class="a" style="left:1447px;top:114px;width:16px;height:494px;background:#f0f0f0"></div>
<div class="a" style="left:1463px;top:114px;width:13px;height:494px;background:#f8f8f8"></div>
<div class="a" style="left:317px;top:608px;width:37px;height:17px;background:#f8f8f8"></div>
<div class="a" style="left:353px;top:608px;width:1094px;height:17px;background:#f0f0f0"></div>
<div class="a" style="left:1447px;top:608px;width:29px;height:17px;background:#f0f0f0"></div>
<svg style="left:1450px;top:119px" width="9" height="7" viewBox="0 0 9 7"><path d="M1 5.500L4.500 2 8 5.500" fill="none" stroke="#bfbfbf" stroke-width="2"/></svg>
<svg style="left:1450px;top:596px" width="9" height="7" viewBox="0 0 9 7"><path d="M1 2L4.500 5.500 8 2" fill="none" stroke="#bfbfbf" stroke-width="2"/></svg>
<svg style="left:357px;top:612px" width="7" height="9" viewBox="0 0 7 9"><path d="M5.500 1L2 4.500 5.500 8" fill="none" stroke="#bfbfbf" stroke-width="2"/></svg>
<svg style="left:1434px;top:612px" width="7" height="9" viewBox="0 0 7 9"><path d="M2 1L5.500 4.500 2 8" fill="none" stroke="#bfbfbf" stroke-width="2"/></svg>
<div class="a" style="left:1465px;top:118px;width:8px;height:8px;background:#f4c430;border:1px solid #e0b020"></div>
<div class="a" style="left:1463px;top:130px;width:12px;height:1px;background:#808080"></div>
<div class="a" style="left:1465px;top:131px;width:9px;height:5px;background:#fcefc0;border:1px solid #f4d050"></div>
<div class="a" style="left:317px;top:625px;width:1160px;height:1px;background:#a0a0a0"></div>
<div class="a" style="left:317px;top:626px;width:1159px;height:19px;background:#f5f6fc"></div>
<div class="a" style="left:361px;top:625px;width:44px;height:20px;background:#fff;border:1px solid #a0a0a0;border-top:none;border-radius:0 0 3px 3px"></div>
<div class="t" style="left:321px;top:628px;letter-spacing:-0.25px">Design</div>
<div class="t" style="left:365px;top:628px;letter-spacing:-0.2px">Source</div>
<div class="panel" style="left:314px;top:652px;width:1165px;height:289px;box-shadow:none"><div class="hdr"></div><div class="tab in" style="left:59px;width:94px"></div></div>
<svg style="left:319px;top:658px;opacity:.85" width="15" height="15" viewBox="0 0 15 15"><rect x="3.500" y="2.500" width="10" height="11" fill="#f4f4f0" stroke="#b0a890"/><rect x="6" y="1" width="5" height="3" fill="#d8c890" stroke="#a89860" stroke-width=".6"/><path d="M6 7.500h6M6 10.500h6" stroke="#b0b0b0"/><path d="M.8 9l2.200 2.500 4-4.800" stroke="#4a90dc" stroke-width="1.900" fill="none"/></svg>
<div class="t" style="left:339px;top:659px;color:#8a8d96;letter-spacing:-0.6px">Tasks</div>
<svg style="left:379px;top:659px" width="14" height="13" viewBox="0 0 14 13"><rect x=".8" y=".8" width="11.500" height="8.400" rx="1.300" fill="#fff" stroke="#2f55a4" stroke-width="1.600"/><path d="M3 3.700h6.500M3 6h4.500" stroke="#28407c" stroke-width="1"/><rect x="4.500" y="10" width="4" height="1.200" fill="#2f55a4"/><rect x="2.300" y="11.200" width="8.500" height="1.500" rx=".5" fill="#3a66b8"/></svg>
<div class="t" style="left:396px;top:659px">Console</div>
<svg style="left:447px;top:660.5px" width="11" height="11" viewBox="0 0 11 11"><path d="M.7 2.2L2.2.7 5.5 4 8.8.7l1.5 1.5L7 5.5l3.3 3.3-1.5 1.5L5.5 7 2.2 10.3.7 8.800 4 5.500z" fill="#fff" stroke="#505050" stroke-width=".9"/></svg>
<svg style="left:1253px;top:658px" width="16" height="16" viewBox="0 0 16 16"><path d="M.500.500h7l2.500 2.500v10h-9.500z" fill="#f4f6fb" stroke="#a8b0c4"/><path d="M2 4h6M2 6h6M2 8h6M2 10h4" stroke="#5a80c8" stroke-width="1"/><path d="M8.500 9.500l5.500 5.500M14 9.500l-5.500 5.500" stroke="#8a8a8a" stroke-width="1.800"/></svg>
<svg style="left:1276px;top:658px" width="16" height="16" viewBox="0 0 16 16"><rect x="3.500" y=".500" width="8" height="14" fill="#eef2fa" stroke="#a8b0c4"/><rect x="11.500" y=".500" width="3.500" height="14" fill="#dfe6f4" stroke="#7890c0"/><path d="M13 4v1M13 8v1M13 11v1" stroke="#2a4fa0"/><rect x=".500" y="8.500" width="8" height="6" fill="#f0c040" stroke="#a87a18"/><path d="M2.500 8.500v-2a2 2 0 014 0v2" fill="none" stroke="#a87a18" stroke-width="1.200"/></svg>
<svg style="left:1299px;top:658px" width="16" height="16" viewBox="0 0 16 16"><path d="M.500.500h8l2 2v10h-10z" fill="#f4f6fb" stroke="#a8b0c4"/><path d="M2 4h6M2 6h6M2 8h4M2 10h4" stroke="#5a80c8" stroke-width="1"/><path d="M14.500 3v7h-5.500v-2l-3.500 3.500 3.500 3.500v-2h8.500v-10z" fill="#fbe6a0" stroke="#c09030" stroke-width=".8"/></svg>
<div class="a" style="left:1320px;top:656px;width:1px;height:18px;background:#808080"></div>
<svg style="left:1330px;top:658px" width="16" height="16" viewBox="0 0 16 16"><rect x=".500" y="5.500" width="13" height="9" fill="#fff" stroke="#3a5fa8"/><rect x="1" y="6" width="12" height="2.500" fill="#4a7fd0"/><path d="M7 12l5-6" stroke="#808080" stroke-width=".9"/><circle cx="12.500" cy="3.500" r="2.700" fill="#38a838" stroke="#1f7a22" stroke-width=".8"/><path d="M9 7.500l3.500-2" stroke="#1f7a22" stroke-width="1.500"/></svg>
<svg style="left:1355px;top:658px" width="14" height="15" viewBox="0 0 14 15"><rect x=".500" y=".500" width="13" height="10" fill="#d0d0d0" stroke="#909090"/><rect x="2.500" y="2.500" width="9" height="6" fill="#f8f8f8"/><path d="M4 4.500h6M4 6.500h4" stroke="#a0a0a0" stroke-width=".8"/><rect x="5" y="11" width="4" height="1.500" fill="#909090"/><rect x="2.500" y="12.500" width="9" height="1.500" fill="#a8a8a8"/></svg>
<svg style="left:1376px;top:663px" width="7" height="4" viewBox="0 0 7 4"><path d="M0 0h7L3.5 4z" fill="#707070"/></svg>
<svg style="left:1392px;top:657px" width="17" height="16" viewBox="0 0 17 16"><rect x=".5" y="3.500" width="13" height="11" fill="#f4f7fc" stroke="#a68a52"/><rect x="1" y="4" width="12" height="2.500" fill="#5a9bd8"/><path d="M12 .8l1.200 2.300 2.300 1.200-2.300 1.200-1.200 2.300-1.200-2.300-2.300-1.200 2.300-1.200z" fill="#fffbe0" stroke="#c9a03a" stroke-width=".9"/><path d="M5 14q6-1 7.500-6" stroke="#f0d89a" stroke-width="1.500" fill="none"/></svg>
<svg style="left:1414px;top:663px" width="7" height="4" viewBox="0 0 7 4"><path d="M0 0h7L3.5 4z" fill="#222"/></svg>
<div class="a" style="left:1431px;top:660px;width:10px;height:4px;border:1px solid #555;background:#fff"></div>
<div class="a" style="left:1454px;top:660px;width:10px;height:10px;border:1px solid #5c5c5c;border-top:2px solid #6c6c6c;background:#fff"></div>
<div class="t" style="left:317px;top:681px;letter-spacing:0.1px">midPoint console</div>
<div class="a" style="left:317px;top:695px;width:1160px;height:1px;background:#a0a0a0"></div>
<div class="con" style="left:319px;top:698px">Wed Sep 07 16:39:31 CEST 2016 [Default]: File L/Test/objects/systemConfigurations/SystemConfiguration.xml was successfully created.</div>
<div class="con" style="left:319px;top:713px">Wed Sep 07 16:39:31 CEST 2016 [Default]: File L/Test/objects/tasks/Cleanup.xml was successfully created.</div>
<div class="con" style="left:319px;top:728px">Wed Sep 07 16:39:31 CEST 2016 [Default]: File L/Test/objects/tasks/Trigger Scanner.xml was successfully created.</div>
<div class="con" style="left:319px;top:743px">Wed Sep 07 16:39:31 CEST 2016 [Default]: File L/Test/objects/tasks/Validity Scanner.xml was successfully created.</div>
<div class="con" style="left:319px;top:758px">Wed Sep 07 16:39:31 CEST 2016 [Default]: File L/Test/objects/roles/Approver.xml was successfully created.</div>
<div class="con" style="left:319px;top:773px">Wed Sep 07 16:39:31 CEST 2016 [Default]: File L/Test/objects/roles/End user.xml was successfully created.</div>
<div class="con" style="left:319px;top:788px">Wed Sep 07 16:39:32 CEST 2016 [Default]: File L/Test/objects/roles/Reviewer.xml was successfully created.</div>
<div class="con" style="left:319px;top:803px">Wed Sep 07 16:39:32 CEST 2016 [Default]: File L/Test/objects/roles/Superuser.xml was successfully created.</div>
<div class="con" style="left:319px;top:818px">Wed Sep 07 16:39:32 CEST 2016 [Default]: File L/Test/objects/valuePolicies/Default Password Policy.xml was successfully created.</div>
<div class="con" style="left:319px;top:833px">Wed Sep 07 16:39:33 CEST 2016 [Default]: File L/Test/objects/securityPolicies/Default Security Policy.xml was successfully created.</div>
<div class="con" style="left:319px;top:848px">Wed Sep 07 16:39:33 CEST 2016 [Default]: Downloaded 11 object(s)</div>
<div class="con" style="left:319px;top:863px">Wed Sep 07 16:56:06 CEST 2016 [Default]: Successfully uploaded /Test/objects/users/user1.xml</div>
<div class="con" style="left:319px;top:878px">Wed Sep 07 17:00:46 CEST 2016 [Default]: Successfully executed /Test/queries/query.xml [see <a>Server log</a>; <a>Data output</a>; <a>Console output</a>; <a>Operation result</a>] (#00001)</div>
<div class="a" style="left:1460px;top:696px;width:16px;height:226px;background:#f0f0f0"></div>
<div class="a" style="left:1460px;top:735px;width:15px;height:168px;background:#cdcdcd"></div>
<svg style="left:1463px;top:702px" width="9" height="7" viewBox="0 0 9 7"><path d="M1 5.500L4.500 2 8 5.500" fill="none" stroke="#505050" stroke-width="2"/></svg>
<svg style="left:1463px;top:909px" width="9" height="7" viewBox="0 0 9 7"><path d="M1 2L4.500 5.500 8 2" fill="none" stroke="#505050" stroke-width="2"/></svg>
<div class="a" style="left:317px;top:922px;width:1159px;height:16px;background:#f0f0f0"></div>
<div class="a" style="left:334px;top:922px;width:752px;height:15px;background:#cdcdcd"></div>
<svg style="left:321px;top:925px" width="7" height="9" viewBox="0 0 7 9"><path d="M5.500 1L2 4.500 5.500 8" fill="none" stroke="#505050" stroke-width="2"/></svg>
<svg style="left:1447px;top:925px" width="7" height="9" viewBox="0 0 7 9"><path d="M2 1L5.500 4.500 2 8" fill="none" stroke="#505050" stroke-width="2"/></svg>
<svg style="left:7px;top:946px;opacity:1" width="12" height="16" viewBox="0 0 12 16"><defs><linearGradient id="xg" x1="0" y1="0" x2="0" y2="1"><stop offset="0" stop-color="#fff"/><stop offset="1" stop-color="#dfe7f7"/></linearGradient></defs><path d="M.500 2.500h7l3 3v10h-10z" fill="url(#xg)" stroke="#8c9bc0"/><path d="M.500 15V2.500h7" fill="none" stroke="#b5a576"/><path d="M7.500 2.500l3 3h-3z" fill="#ecca72" stroke="#c4a85a" stroke-width=".8"/><text x="4.100" y="12.900" transform="scale(.74 1)" style="font-family:'Liberation Sans',sans-serif;font-weight:bold;font-size:10px" fill="#203c6c" stroke="#203c6c" stroke-width=".25">X</text></svg>
<div class="t" style="left:25px;top:949px">query.xml - Test/queries</div>
<div class="a" style="left:1196px;top:949px;width:2px;height:3px;background:linear-gradient(rgba(120,104,78,.6) 0,rgba(120,104,78,.6) 2px,rgba(255,255,255,.4) 2px)"></div><div class="a" style="left:1196px;top:953px;width:2px;height:3px;background:linear-gradient(rgba(120,104,78,.6) 0,rgba(120,104,78,.6) 2px,rgba(255,255,255,.4) 2px)"></div><div class="a" style="left:1196px;top:958px;width:2px;height:3px;background:linear-gradient(rgba(120,104,78,.6) 0,rgba(120,104,78,.6) 2px,rgba(255,255,255,.4) 2px)"></div><div class="a" style="left:1196px;top:962px;width:2px;height:3px;background:linear-gradient(rgba(120,104,78,.6) 0,rgba(120,104,78,.6) 2px,rgba(255,255,255,.4) 2px)"></div>
</body></html>
